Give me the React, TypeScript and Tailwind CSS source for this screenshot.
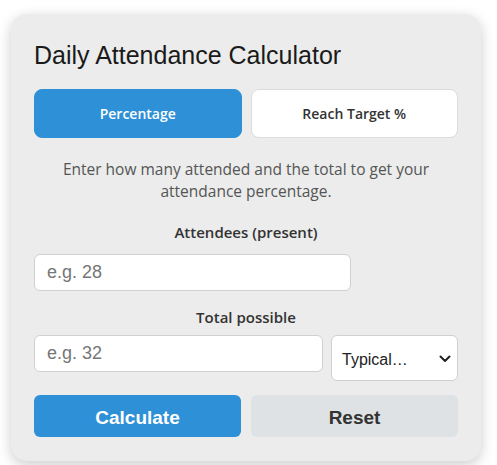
import { useState } from 'react'

export default function App() {
  const [mode, setMode] = useState<'percentage' | 'target'>('percentage')
  const [present, setPresent] = useState('')
  const [total, setTotal] = useState('')

  const tabClass = (active: boolean) =>
    active
      ? 'flex-1 h-[49px] rounded-[8px] bg-[#2e90d7] text-white border border-[#2e90d7] text-[14px] font-semibold'
      : 'flex-1 h-[49px] rounded-[8px] bg-white text-[#333] border border-[#dcdcdc] text-[14px] font-semibold'

  return (
    <div className="w-[497px] h-[465px] bg-white overflow-hidden">
      <div className="ml-[11px] mt-[14px] w-[470px] rounded-[16px] bg-[#ebeceb] px-[23px] pt-[27px] pb-[24px] shadow-[0_4px_14px_rgba(0,0,0,0.2)]">
        {/* Title */}
        <h1 className="text-[25px] leading-[28px] text-[#1a1a1a] font-['Liberation_Sans',Arial,sans-serif]">
          Daily Attendance Calculator
        </h1>

        {/* Mode tabs */}
        <div className="mt-[20px] flex gap-[9px] font-['Open_Sans',sans-serif]">
          <button className={tabClass(mode === 'percentage')} onClick={() => setMode('percentage')}>
            Percentage
          </button>
          <button className={tabClass(mode === 'target')} onClick={() => setMode('target')}>
            Reach Target %
          </button>
        </div>

        <p className="mt-[20px] text-center text-[15.5px] leading-[22px] text-[#555] font-['Open_Sans',sans-serif]">
          Enter how many attended and the total to get your<br />attendance percentage.
        </p>

        <label className="block mt-[20px] text-center text-[15px] leading-[20px] font-semibold text-[#333] font-['Open_Sans',sans-serif]">
          Attendees (present)
        </label>
        <input
          type="number"
          value={present}
          onChange={(e) => setPresent(e.target.value)}
          placeholder="e.g. 28"
          className="mt-[12px] block w-[317px] h-[37px] rounded-[6px] border border-[#d0d0d0] bg-white px-[12px] text-[18px] text-[#222] placeholder:text-[#767676] outline-none font-['Liberation_Sans',Arial,sans-serif]"
        />

        <label className="block mt-[16px] text-center text-[15px] leading-[20px] font-semibold text-[#333] font-['Open_Sans',sans-serif]">
          Total possible
        </label>
        <div className="mt-[8px] flex items-start gap-[8px]">
          <input
            type="number"
            value={total}
            onChange={(e) => setTotal(e.target.value)}
            placeholder="e.g. 32"
            className="block w-[289px] h-[37px] rounded-[6px] border border-[#d0d0d0] bg-white px-[12px] text-[18px] text-[#222] placeholder:text-[#767676] outline-none font-['Liberation_Sans',Arial,sans-serif]"
          />
          <div className="relative w-[127px] h-[46px]">
            <select className="appearance-none w-full h-full rounded-[6px] border border-[#d0d0d0] bg-white pl-[10px] pr-[26px] pt-[4px] text-[16px] text-[#222] outline-none font-['Liberation_Sans',Arial,sans-serif]">
              <option>Typical…</option>
              <option>20 (month)</option>
              <option>180 (school year)</option>
            </select>
            <svg className="absolute right-[7px] top-[20px] w-[12px] h-[8px] pointer-events-none" viewBox="0 0 12 8" fill="none">
              <path d="M1.5 1.5 L6 6 L10.5 1.5" stroke="#222" strokeWidth="2" strokeLinecap="round" strokeLinejoin="round" />
            </svg>
          </div>
        </div>

        <div className="mt-[14px] flex gap-[10px] font-['Liberation_Sans',Arial,sans-serif]">
          <button className="flex-1 h-[42px] pt-[5px] rounded-[6px] bg-[#2e90d7] text-white text-[19px] font-bold">
            Calculate
          </button>
          <button
            className="flex-1 h-[42px] pt-[5px] rounded-[6px] bg-[#dfe2e5] text-[#333] text-[19px] font-bold"
            onClick={() => { setPresent(''); setTotal('') }}
          >
            Reset
          </button>
        </div>
      </div>
    </div>
  )
}
